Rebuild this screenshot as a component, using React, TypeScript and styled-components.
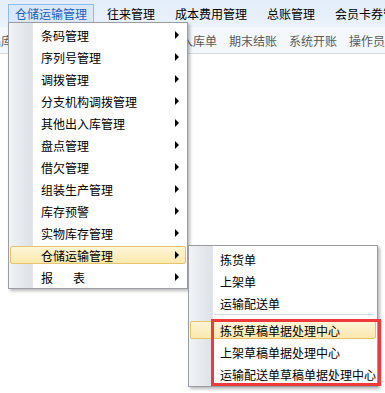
import React from 'react';
import styled, { createGlobalStyle } from 'styled-components';

const GlobalStyle = createGlobalStyle`
  body {
    margin: 0;
    background: #ffffff;
    font-family: "Noto Sans CJK SC", "Noto Sans", sans-serif;
    font-size: 12px;
    color: #000;
  }
`;

const Page = styled.div`
  position: relative;
  width: 385px;
  height: 393px;
  overflow: hidden;
  background: #fff;
`;

const MenuBar = styled.div`
  height: 27px;
  display: flex;
  align-items: center;
  gap: 6px;
  padding-left: 8px;
  background: linear-gradient(to bottom, #e3edf9, #eaf2fb);
  white-space: nowrap;
`;

const TopItem = styled.div<{ $active?: boolean }>`
  box-sizing: border-box;
  height: 19px;
  line-height: 17px;
  padding: 0 6px;
  border: 1px solid ${(p) => (p.$active ? '#8dbbea' : 'transparent')};
  background: ${(p) => (p.$active ? '#d9e9fb' : 'transparent')};
  color: ${(p) => (p.$active ? '#1d5fc0' : '#000')};
`;

const ToolBar = styled.div`
  height: 26px;
  display: flex;
  align-items: center;
  justify-content: flex-end;
  gap: 12px;
  overflow: hidden;
  white-space: nowrap;
  color: #5a5a5a;
  background: #f5f8fb;
  border-bottom: 1px solid #d6dbe2;
`;

const ToolItem = styled.span`
  flex: none;
`;

const Dropdown = styled.div<{ $left: number; $top: number; $width: number }>`
  position: absolute;
  left: ${(p) => p.$left}px;
  top: ${(p) => p.$top}px;
  width: ${(p) => p.$width}px;
  box-sizing: border-box;
  padding: ${(p) => (p.$top > 100 ? '2px 0 1px' : '1px 0 0')};
  border: 1px solid #9a9ea4;
  background: linear-gradient(
    to right,
    #f1f3f5 0px,
    #dde2e7 23px,
    #e6e9ec 24px,
    #ffffff 24px
  );
  box-shadow: 2px 2px 3px rgba(0, 0, 0, 0.28);
`;

const MenuItem = styled.div`
  box-sizing: border-box;
  height: 22px;
  padding: 2px 1px;
`;

const ItemBody = styled.div<{ $active?: boolean; $indent: number }>`
  box-sizing: border-box;
  height: 18px;
  display: flex;
  align-items: center;
  padding-left: ${(p) => p.$indent}px;
  padding-right: 6px;
  border: 1px solid ${(p) => (p.$active ? '#e5c46c' : 'transparent')};
  border-radius: 2px;
  background: ${(p) =>
    p.$active ? 'linear-gradient(to bottom, #fdf5d8, #fbe8ad)' : 'transparent'};
  white-space: nowrap;
`;

const Label = styled.span<{ $spread?: boolean }>`
  flex: 1;
  letter-spacing: ${(p) => (p.$spread ? '20px' : '0')};
`;

const Arrow = styled.span`
  width: 0;
  height: 0;
  border-left: 4px solid #000;
  border-top: 4px solid transparent;
  border-bottom: 4px solid transparent;
`;

const Separator = styled.div`
  height: 1px;
  margin: 0 3px 3px 25px;
  background: #d5d7da;
  border-bottom: 1px solid #fff;
`;

const Callout = styled.div`
  position: absolute;
  left: 211px;
  top: 319px;
  width: 170px;
  height: 67px;
  box-sizing: border-box;
  border: 3px solid #ee3a3a;
`;

const topMenus = ['仓储运输管理', '往来管理', '成本费用管理', '总账管理', '会员卡券管理'];

const tools = ['商品库存', '其他入库单', '其他出库单', '入库单', '期末结账', '系统开账', '操作员'];

const mainItems = [
  '条码管理',
  '序列号管理',
  '调拨管理',
  '分支机构调拨管理',
  '其他出入库管理',
  '盘点管理',
  '借欠管理',
  '组装生产管理',
  '库存预警',
  '实物库存管理',
  '仓储运输管理',
  '报表',
];

const subTop = ['拣货单', '上架单', '运输配送单'];
const subBottom = ['拣货草稿单据处理中心', '上架草稿单据处理中心', '运输配送单草稿单据处理中心'];

export default function App(): React.ReactElement {
  return (
    <Page>
      <GlobalStyle />
      <MenuBar>
        {topMenus.map((m, i) => (
          <TopItem key={m} $active={i === 0}>
            {m}
          </TopItem>
        ))}
      </MenuBar>
      <ToolBar>
        {tools.map((t) => (
          <ToolItem key={t}>{t}</ToolItem>
        ))}
      </ToolBar>

      <Dropdown $left={8} $top={22} $width={180}>
        {mainItems.map((item) => (
          <MenuItem key={item}>
            <ItemBody $indent={30} $active={item === '仓储运输管理'}>
              <Label $spread={item === '报表'}>{item}</Label>
              <Arrow />
            </ItemBody>
          </MenuItem>
        ))}
      </Dropdown>

      <Dropdown $left={188} $top={245} $width={190}>
        {subTop.map((item) => (
          <MenuItem key={item}>
            <ItemBody $indent={29}>
              <Label>{item}</Label>
            </ItemBody>
          </MenuItem>
        ))}
        <Separator />
        {subBottom.map((item, i) => (
          <MenuItem key={item}>
            <ItemBody $indent={29} $active={i === 0}>
              <Label>{item}</Label>
            </ItemBody>
          </MenuItem>
        ))}
      </Dropdown>

      <Callout />
    </Page>
  );
}
